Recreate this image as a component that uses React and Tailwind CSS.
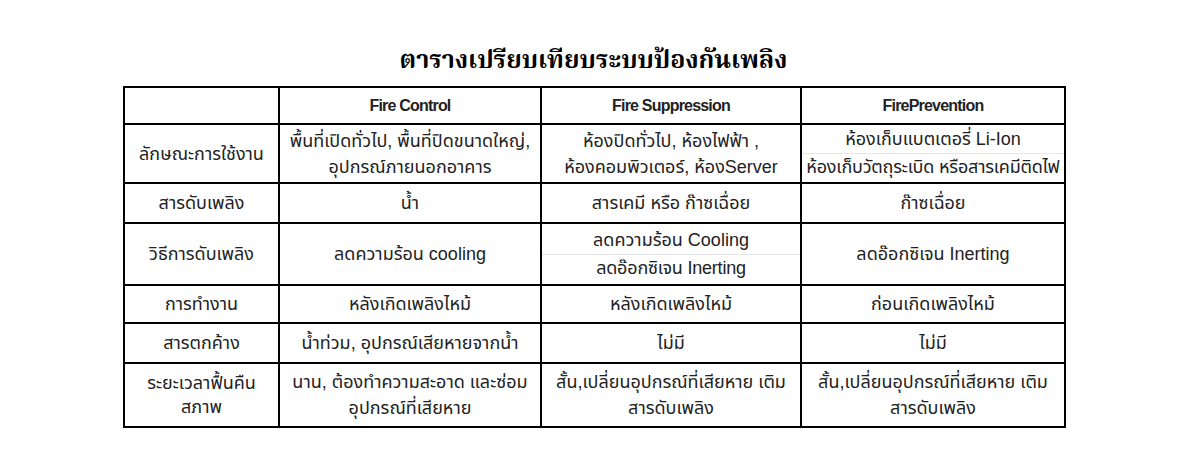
// App.jsx — ตารางเปรียบเทียบระบบป้องกันเพลิง
const font = { fontFamily: '"Liberation Sans", "Noto Sans Thai", "Noto Sans", sans-serif' };
const titleFont = { fontFamily: '"Noto Serif Thai", "Liberation Serif", "Noto Sans Thai", serif' };

const rows = [
  {
    label: 'ลักษณะการใช้งาน',
    h: 'h-[59px]',
    cells: [
      ['พื้นที่เปิดทั่วไป, พื้นที่ปิดขนาดใหญ่,', 'อุปกรณ์ภายนอกอาคาร'],
      ['ห้องปิดทั่วไป, ห้องไฟฟ้า ,', 'ห้องคอมพิวเตอร์, ห้องServer'],
      { split: ['ห้องเก็บแบตเตอรี่ Li-Ion', 'ห้องเก็บวัตถุระเบิด หรือสารเคมีติดไฟ'] },
    ],
  },
  { label: 'สารดับเพลิง', h: 'h-[40px]', cells: [['น้ำ'], ['สารเคมี หรือ ก๊าซเฉื่อย'], ['ก๊าซเฉื่อย']] },
  {
    label: 'วิธีการดับเพลิง',
    h: 'h-[62px]',
    cells: [['ลดความร้อน cooling'], { split: ['ลดความร้อน Cooling', 'ลดอ๊อกซิเจน Inerting'] }, ['ลดอ๊อกซิเจน Inerting']],
  },
  { label: 'การทำงาน', h: 'h-[38px]', cells: [['หลังเกิดเพลิงไหม้'], ['หลังเกิดเพลิงไหม้'], ['ก่อนเกิดเพลิงไหม้']] },
  { label: 'สารตกค้าง', h: 'h-[40px]', cells: [['น้ำท่วม, อุปกรณ์เสียหายจากน้ำ'], ['ไม่มี'], ['ไม่มี']] },
  {
    label: ['ระยะเวลาฟื้นคืน', 'สภาพ'],
    h: 'h-[64px]',
    cells: [
      ['นาน, ต้องทำความสะอาด และซ่อม', 'อุปกรณ์ที่เสียหาย'],
      ['สั้น,เปลี่ยนอุปกรณ์ที่เสียหาย เติม', 'สารดับเพลิง'],
      ['สั้น,เปลี่ยนอุปกรณ์ที่เสียหาย เติม', 'สารดับเพลิง'],
    ],
  },
];

function Cell({ value }) {
  if (value.split) {
    return (
      <td className="border-2 border-black p-0 text-center align-middle">
        <div className="flex h-full flex-col">
          <div className="flex flex-1 items-center justify-center border-b border-gray-200 whitespace-nowrap">{value.split[0]}</div>
          <div className="flex flex-1 items-center justify-center whitespace-nowrap tracking-[-0.2px]">{value.split[1]}</div>
        </div>
      </td>
    );
  }
  return (
    <td className="border-2 border-black px-1 text-center align-middle leading-[26px]">
      {value.map((line) => (
        <div key={line} className="whitespace-nowrap">{line}</div>
      ))}
    </td>
  );
}

export default function App() {
  return (
    <div className="h-[471px] w-[1200px] bg-white text-[#222]" style={font}>
      <div className="ml-[123px] w-[941px]">
        <h1 className="pt-[43px] text-center text-[25px] font-bold leading-[36px] text-black" style={titleFont}>
          ตารางเปรียบเทียบระบบป้องกันเพลิง
        </h1>
        <table className="mt-[7px] w-[941px] table-fixed border-collapse text-[18px]">
          <colgroup>
            <col className="w-[155px]" />
            <col className="w-[262px]" />
            <col className="w-[260px]" />
            <col className="w-[264px]" />
          </colgroup>
          <thead>
            <tr className="h-[37px]">
              <th className="border-2 border-black" />
              <th className="border-2 border-black text-[16px] font-bold tracking-[-0.8px]">Fire Control</th>
              <th className="border-2 border-black text-[16px] font-bold tracking-[-0.8px]">Fire Suppression</th>
              <th className="border-2 border-black text-[16px] font-bold tracking-[-0.8px]">FirePrevention</th>
            </tr>
          </thead>
          <tbody>
            {rows.map((r) => (
              <tr key={[].concat(r.label).join()} className={r.h}>
                <td className="border-2 border-black text-center align-middle leading-[24px]">
                  {[].concat(r.label).map((l) => (
                    <div key={l}>{l}</div>
                  ))}
                </td>
                {r.cells.map((c, i) => (
                  <Cell key={i} value={c} />
                ))}
              </tr>
            ))}
          </tbody>
        </table>
      </div>
    </div>
  );
}
